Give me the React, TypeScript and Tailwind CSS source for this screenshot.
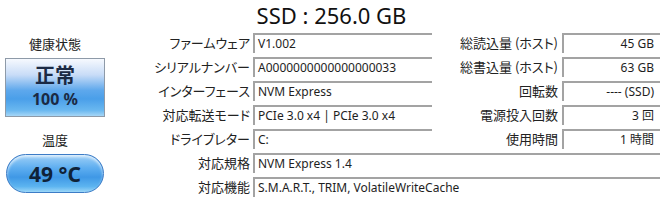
import React from "react";

const jp = "font-['Noto_Sans_CJK_JP',sans-serif]";
const val = "font-['Noto_Sans','Noto_Sans_CJK_JP',sans-serif]";

function Label({ text, className = "" }: { text: string; className?: string }) {
  return (
    <div
      className={`${jp} text-[13px] leading-[20px] text-right text-[#222] whitespace-nowrap [font-feature-settings:'palt'] ${className}`}
    >
      {text}
    </div>
  );
}

function Box({ text, right = false, className = "" }: { text: string; right?: boolean; className?: string }) {
  return (
    <div
      className={`h-[20px] border-t-2 border-l-2 border-[#a3a3a3] bg-white ${val} text-[12px] leading-[18px] text-[#1e1e1e] whitespace-nowrap overflow-hidden ${
        right ? "text-right pr-[6px]" : "pl-[3px]"
      } ${className}`}
    >
      {text}
    </div>
  );
}

function Row({ l, v, rl, rv }: { l: string; v: string; rl?: string; rv?: string }) {
  return (
    <div className="flex h-[20px]">
      <Label text={l} className="w-[140px]" />
      {rl !== undefined ? (
        <>
          <Box text={v} className="ml-[3px] w-[179px]" />
          <Label text={rl} className="w-[126px]" />
          <Box text={rv ?? ""} right className="ml-[4px] w-[98px]" />
        </>
      ) : (
        <Box text={v} className="ml-[3px] w-[407px]" />
      )}
    </div>
  );
}

export default function App() {
  return (
    <div className="w-[663px] h-[201px] bg-white overflow-hidden flex flex-col">
      <div className={`h-[30px] text-center ${val} text-[22px] leading-[30px] text-[#111]`}>
        SSD : 256.0 GB
      </div>
      <div className="flex">
        <div className="w-[110px] flex flex-col items-center">
          <div className={`${jp} text-[13px] leading-[16px] mt-[6px] text-[#222]`}>健康状態</div>
          <div className="mt-[6px] w-[100px] h-[59px] border border-[#8e9aa8] bg-[linear-gradient(to_bottom,#f6f9fe_0%,#c8dcf7_28%,#5ea8ec_55%,#4a9fe9_70%,#6ab8f0_90%,#a6d6f6_100%)] flex flex-col items-center">
            <div className={`${jp} font-bold text-[20px] leading-[24px] mt-[4px] text-[#1b2a44]`}>正常</div>
            <div className={`${val} font-bold text-[16px] leading-[20px] mt-[2px] text-[#1b2a44]`}>100 %</div>
          </div>
          <div className={`${jp} text-[13px] leading-[16px] mt-[15px] text-[#222]`}>温度</div>
          <div className="mt-[6px] w-[98px] h-[39px] rounded-full border border-[#3d7cc6] bg-[linear-gradient(to_bottom,#9fd0f7_0%,#5eaef0_35%,#3f98e6_60%,#5cb4f0_85%,#9ad6f8_100%)] shadow-[inset_0_2px_3px_rgba(255,255,255,0.7)] flex items-center justify-center">
            <div className={`${val} font-bold text-[21px] leading-[26px] text-[#0f2238]`}>49 °C</div>
          </div>
        </div>
        <div className="flex flex-col gap-[4px] pt-[3px]">
          <Row l="ファームウェア" v="V1.002" rl="総読込量 (ホスト)" rv="45 GB" />
          <Row l="シリアルナンバー" v="A0000000000000000033" rl="総書込量 (ホスト)" rv="63 GB" />
          <Row l="インターフェース" v="NVM Express" rl="回転数" rv="---- (SSD)" />
          <Row l="対応転送モード" v="PCIe 3.0 x4 | PCIe 3.0 x4" rl="電源投入回数" rv="3 回" />
          <Row l="ドライブレター" v="C:" rl="使用時間" rv="1 時間" />
          <Row l="対応規格" v="NVM Express 1.4" />
          <Row l="対応機能" v="S.M.A.R.T., TRIM, VolatileWriteCache" />
        </div>
      </div>
    </div>
  );
}
